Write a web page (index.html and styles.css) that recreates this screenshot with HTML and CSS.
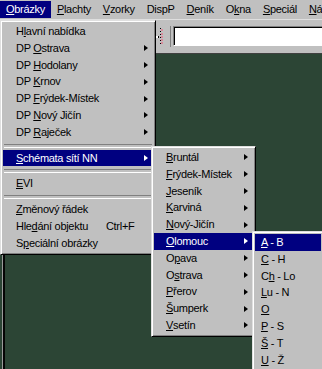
FILE: index.html
```html
<!DOCTYPE html>
<html lang="cs">
<head>
<meta charset="utf-8">
<title>Obrázky</title>
<link rel="stylesheet" href="styles.css">
</head>
<body>
<div class="app">
  <nav class="menubar">
    <span class="mb-item active"><u>O</u>brázky</span>
    <span class="mb-item"><u>P</u>lachty</span>
    <span class="mb-item"><u>V</u>zorky</span>
    <span class="mb-item">DispP</span>
    <span class="mb-item"><u>D</u>eník</span>
    <span class="mb-item">O<u>k</u>na</span>
    <span class="mb-item"><u>S</u>peciál</span>
    <span class="mb-item"><u>N</u>ápověda</span>
  </nav>

  <div class="toolbar">
    <div class="tb-spacer"></div>
    <div class="tb-btn">
      <svg width="12" height="20" viewBox="0 0 12 20">
        <rect x="0" y="10" width="2" height="2" fill="#ffffff"/>
        <rect x="2" y="10" width="1" height="2" fill="#000"/>
        <rect x="4" y="2" width="1" height="1" fill="#000"/>
        <rect x="4" y="5" width="1" height="1" fill="#000"/>
        <rect x="4" y="8" width="1" height="1" fill="#000"/>
        <rect x="4" y="11" width="1" height="1" fill="#000"/>
        <rect x="4" y="14" width="1" height="1" fill="#000"/>
        <rect x="4" y="17" width="1" height="1" fill="#000"/>
        <rect x="5" y="3" width="2" height="2" fill="#d88a9a"/>
        <rect x="5" y="7" width="2" height="2" fill="#d88a9a"/>
        <rect x="5" y="10" width="2" height="2" fill="#d88a9a"/>
        <rect x="5" y="13" width="2" height="2" fill="#d88a9a"/>
        <rect x="5" y="16" width="2" height="2" fill="#d88a9a"/>
      </svg>
    </div>
    <div class="tb-input"></div>
  </div>

  <div class="workspace"><div class="mdi"></div></div>

  <div class="menu menu1">
    <div class="mi"><span class="lb">H<u>l</u>avní nabídka</span></div>
    <div class="mi"><span class="lb">DP <u>O</u>strava</span><i class="arr"></i></div>
    <div class="mi"><span class="lb">DP <u>H</u>odolany</span><i class="arr"></i></div>
    <div class="mi"><span class="lb">DP <u>K</u>rnov</span><i class="arr"></i></div>
    <div class="mi"><span class="lb">DP <u>F</u>rýdek-Místek</span><i class="arr"></i></div>
    <div class="mi"><span class="lb">DP <u>N</u>ový Jičín</span><i class="arr"></i></div>
    <div class="mi"><span class="lb">DP <u>R</u>aječek</span><i class="arr"></i></div>
    <div class="sep"></div>
    <div class="mi sel"><span class="lb"><u>S</u>chémata sítí NN</span><i class="arr"></i></div>
    <div class="sep"></div>
    <div class="mi"><span class="lb"><u>E</u>VI</span></div>
    <div class="sep"></div>
    <div class="mi"><span class="lb"><u>Z</u>měnový řádek</span></div>
    <div class="mi"><span class="lb">Hle<u>d</u>ání objektu</span><span class="key">Ctrl+F</span></div>
    <div class="mi"><span class="lb">S<u>p</u>eciální obrázky</span></div>
  </div>

  <div class="menu menu2">
    <div class="mi"><span class="lb"><u>B</u>runtál</span><i class="arr"></i></div>
    <div class="mi"><span class="lb"><u>F</u>rýdek-Místek</span><i class="arr"></i></div>
    <div class="mi"><span class="lb"><u>J</u>eseník</span><i class="arr"></i></div>
    <div class="mi"><span class="lb"><u>K</u>arviná</span><i class="arr"></i></div>
    <div class="mi"><span class="lb"><u>N</u>ový-Jičín</span><i class="arr"></i></div>
    <div class="mi sel"><span class="lb"><u>O</u>lomouc</span><i class="arr"></i></div>
    <div class="mi"><span class="lb">O<u>p</u>ava</span><i class="arr"></i></div>
    <div class="mi"><span class="lb">O<u>s</u>trava</span><i class="arr"></i></div>
    <div class="mi"><span class="lb"><u>P</u>řerov</span><i class="arr"></i></div>
    <div class="mi"><span class="lb"><u>Š</u>umperk</span><i class="arr"></i></div>
    <div class="mi"><span class="lb"><u>V</u>setín</span><i class="arr"></i></div>
  </div>

  <div class="menu menu3">
    <div class="mi sel"><span class="lb"><u>A</u> - B</span></div>
    <div class="mi"><span class="lb"><u>C</u> - H</span></div>
    <div class="mi"><span class="lb">C<u>h</u> - Lo</span></div>
    <div class="mi"><span class="lb"><u>L</u>u - N</span></div>
    <div class="mi"><span class="lb"><u>O</u></span></div>
    <div class="mi"><span class="lb"><u>P</u> - S</span></div>
    <div class="mi"><span class="lb"><u>Š</u> - T</span></div>
    <div class="mi"><span class="lb"><u>U</u> - Ž</span></div>
  </div>
</div>
</body>
</html>
```

FILE: styles.css
```css
* { box-sizing: border-box; }

html, body {
  margin: 0;
  padding: 0;
}

body {
  width: 322px;
  height: 369px;
  overflow: hidden;
  background: #2c4535;
  font-family: "Liberation Sans", Arial, sans-serif;
  font-size: 11px;
  letter-spacing: -0.3px;
  color: #000;
}

u {
  text-decoration: underline;
  text-decoration-thickness: 1px;
  text-underline-offset: 1px;
}

.app {
  position: relative;
  width: 322px;
  height: 369px;
  overflow: hidden;
  display: flex;
  flex-direction: column;
}

/* ---------- menu bar ---------- */
.menubar {
  height: 19px;
  background: #c0c0c0;
  display: flex;
  align-items: flex-start;
  padding-top: 1px;
  white-space: nowrap;
  overflow: hidden;
}

.mb-item {
  height: 17px;
  line-height: 17px;
  padding: 0 6px;
  flex: none;
}

.mb-item.active {
  background: #000080;
  color: #fff;
}

/* ---------- toolbar ---------- */
.toolbar {
  height: 35px;
  background: #c0c0c0;
  border-top: 1px solid #dfdfdf;
  border-bottom: 1px solid #404040;
  display: flex;
  align-items: flex-start;
  padding-top: 6px;
}

.tb-spacer {
  width: 156px;
  flex: none;
}

.tb-btn {
  width: 15px;
  height: 21px;
  flex: none;
  border-right: 1px solid #808080;
  margin-right: 2px;
}

.tb-btn svg { display: block; }

.tb-input {
  flex: 1;
  height: 20px;
  background: #fff;
  border-top: 1px solid #808080;
  border-left: 1px solid #808080;
  border-bottom: 1px solid #fff;
  box-shadow: inset 1px 1px 0 #000;
  margin-right: -10px;
}

/* ---------- workspace ---------- */
.workspace {
  flex: 1;
  background: #2c4535;
  display: flex;
}

.mdi {
  flex: 1;
  margin-left: 2px;
  border-left: 1px solid #9a9a9a;
  box-shadow: inset 2px 0 0 #050505;
}

/* ---------- dropdown menus ---------- */
.menu {
  position: absolute;
  background: #c0c0c0;
  border: 1px solid;
  border-color: #dfdfdf #000 #000 #dfdfdf;
  box-shadow: inset 1px 1px 0 #fff, inset -1px -1px 0 #808080;
  padding: 2px;
  white-space: nowrap;
}

.menu1 {
  left: 0;
  top: 20px;
  width: 156px;
}

.menu2 {
  left: 151px;
  top: 146px;
  width: 105px;
}

.menu3 {
  left: 252px;
  top: 231px;
  width: 72px;
}

.mi {
  height: 16.8px;
  line-height: 16.8px;
  display: flex;
  align-items: center;
  padding-left: 13px;
  padding-right: 5px;
}

.lb { white-space: pre; }

.menu2 .mi { padding-left: 12px; }
.menu3 .mi { padding-left: 6px; }

.mi.sel {
  background: #000080;
  color: #fff;
}

.mi .key {
  margin-left: 18px;
}

.arr {
  margin-left: auto;
  width: 0;
  height: 0;
  border-left: 4px solid #000;
  border-top: 3.5px solid transparent;
  border-bottom: 3.5px solid transparent;
}

.mi.sel .arr {
  border-left-color: #fff;
}

.sep {
  height: 9px;
  padding-top: 3px;
}

.sep::before {
  content: "";
  display: block;
  height: 2px;
  margin: 0 1px;
  border-top: 1px solid #808080;
  border-bottom: 1px solid #fff;
}
```
